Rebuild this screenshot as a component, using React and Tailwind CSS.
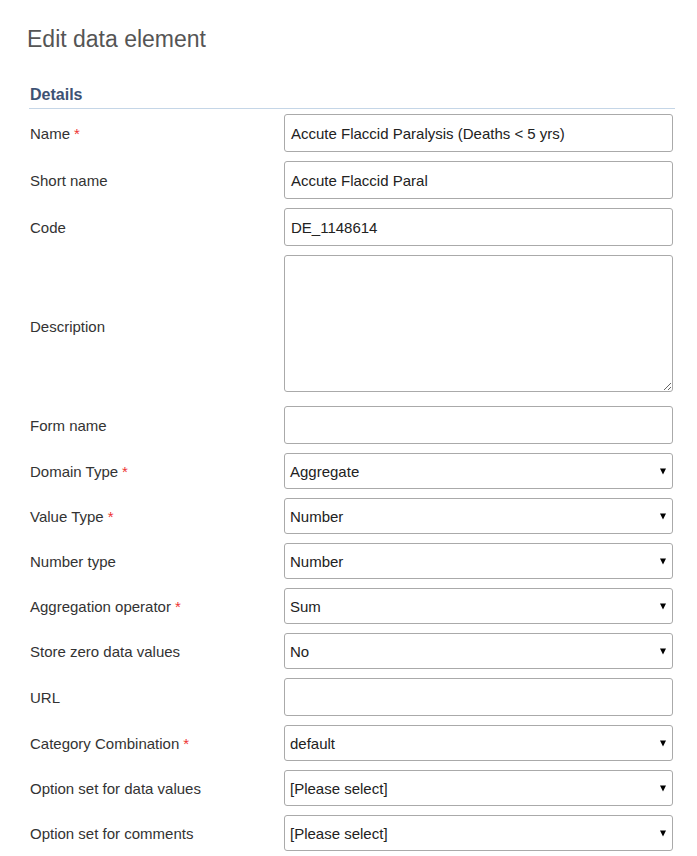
const rows = [
  { label: 'Name', req: true, type: 'input', value: 'Accute Flaccid Paralysis (Deaths < 5 yrs)' },
  { label: 'Short name', type: 'input', value: 'Accute Flaccid Paral' },
  { label: 'Code', type: 'input', value: 'DE_1148614' },
  { label: 'Description', type: 'textarea' },
  { label: 'Form name', type: 'input', value: '' },
  { label: 'Domain Type', req: true, type: 'select', value: 'Aggregate' },
  { label: 'Value Type', req: true, type: 'select', value: 'Number' },
  { label: 'Number type', type: 'select', value: 'Number' },
  { label: 'Aggregation operator', req: true, type: 'select', value: 'Sum' },
  { label: 'Store zero data values', type: 'select', value: 'No' },
  { label: 'URL', type: 'input', value: '' },
  { label: 'Category Combination', req: true, type: 'select', value: 'default' },
  { label: 'Option set for data values', type: 'select', value: '[Please select]' },
  { label: 'Option set for comments', type: 'select', value: '[Please select]' },
];

function Field({ row }) {
  if (row.type === 'textarea') {
    return (
      <textarea
        readOnly
        className="block w-[389px] h-[137px] rounded-[3px] border border-[#aaa] bg-white resize-y outline-none"
      />
    );
  }
  if (row.type === 'select') {
    return (
      <div className="flex items-center justify-between w-[389px] h-[36px] rounded-[3px] border border-[#aaa] bg-white pl-[5px] pr-[6px] pt-[2px] text-[15px] text-[#222]">
        <span>{row.value}</span>
        <svg className="w-[6px] h-[7px] -mt-[2px]" viewBox="0 0 6 7">
          <path d="M0 0.5h6L3 6.5z" fill="#000" />
        </svg>
      </div>
    );
  }
  return (
    <div className="flex items-center w-[389px] h-[38px] rounded-[3px] border border-[#aaa] bg-white px-[6px] pt-[2px] text-[15px] text-[#222]">
      {row.value}
    </div>
  );
}

export default function App() {
  return (
    <div className="min-h-screen bg-white pl-[27px] pr-[22px] pt-[24px] font-['Liberation_Sans',Arial,sans-serif] text-[#333]">
      <h1 className="text-[23px] leading-[30px] text-[#555]">Edit data element</h1>

      {/* ── Details ── */}
      <div className="mt-[31px] ml-[2px] border-b border-[#c5d6e7] pb-[3px] pl-[1px]">
        <h2 className="text-[16px] leading-[20px] font-bold text-[#3d5274]">Details</h2>
      </div>

      <div className="ml-[3px] mt-[5px] flex flex-col">
        {rows.map(row => (
          <div
            key={row.label}
            className={`flex items-center ${row.type === 'textarea' ? 'mb-[14px]' : 'mb-[9px]'}`}
          >
            <div className={`w-[254px] text-[15px] text-[#333] ${row.type === 'textarea' ? 'pt-[7px]' : 'pt-[2px]'}`}>
              {row.label}
              {row.req && <span className="text-[#e33] ml-[4px]">*</span>}
            </div>
            <Field row={row} />
          </div>
        ))}
      </div>
    </div>
  );
}
